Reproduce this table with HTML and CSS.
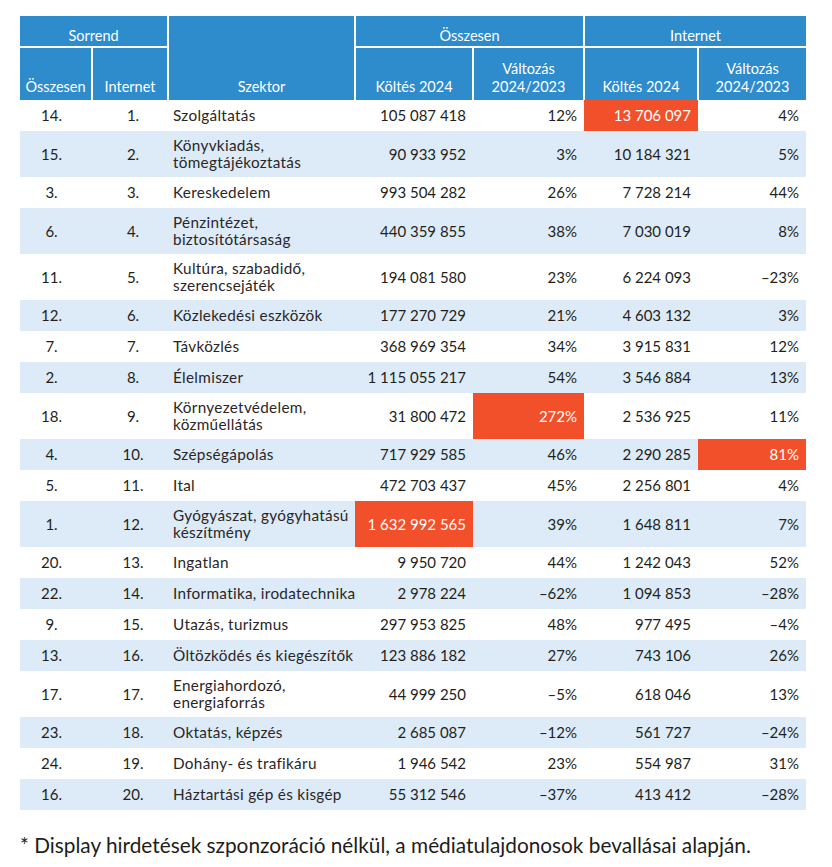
FILE: index.html
```html
<!DOCTYPE html>
<html lang="hu">
<head>
<meta charset="utf-8">
<title>Szektorok</title>
<link rel="stylesheet" href="styles.css">
</head>
<body>
<div class="page">
<table class="data">
<colgroup><col class="c1"><col class="c2"><col class="c3"><col class="c4"><col class="c5"><col class="c6"><col class="c7"></colgroup>
<thead>
<tr class="h1"><th colspan="2">Sorrend</th><th rowspan="2" class="sector-h">Szektor</th><th colspan="2">Összesen</th><th colspan="2" class="last">Internet</th></tr>
<tr class="h2"><th>Összesen</th><th>Internet</th><th>Költés 2024</th><th>Változás<br>2024/2023</th><th>Költés 2024</th><th class="last">Változás<br>2024/2023</th></tr>
</thead>
<tbody>
<tr><td class="r1">14.</td><td class="r2">1.</td><td class="sec">Szolgáltatás</td><td class="num">105 087 418</td><td class="num">12%</td><td class="num hl">13 706 097</td><td class="num">4%</td></tr>
<tr class="two"><td class="r1">15.</td><td class="r2">2.</td><td class="sec">Könyvkiadás,<br>tömegtájékoztatás</td><td class="num">90 933 952</td><td class="num">3%</td><td class="num">10 184 321</td><td class="num">5%</td></tr>
<tr><td class="r1">3.</td><td class="r2">3.</td><td class="sec">Kereskedelem</td><td class="num">993 504 282</td><td class="num">26%</td><td class="num">7 728 214</td><td class="num">44%</td></tr>
<tr class="two"><td class="r1">6.</td><td class="r2">4.</td><td class="sec">Pénzintézet,<br>biztosítótársaság</td><td class="num">440 359 855</td><td class="num">38%</td><td class="num">7 030 019</td><td class="num">8%</td></tr>
<tr class="two"><td class="r1">11.</td><td class="r2">5.</td><td class="sec">Kultúra, szabadidő,<br>szerencsejáték</td><td class="num">194 081 580</td><td class="num">23%</td><td class="num">6 224 093</td><td class="num">–23%</td></tr>
<tr><td class="r1">12.</td><td class="r2">6.</td><td class="sec">Közlekedési eszközök</td><td class="num">177 270 729</td><td class="num">21%</td><td class="num">4 603 132</td><td class="num">3%</td></tr>
<tr><td class="r1">7.</td><td class="r2">7.</td><td class="sec">Távközlés</td><td class="num">368 969 354</td><td class="num">34%</td><td class="num">3 915 831</td><td class="num">12%</td></tr>
<tr><td class="r1">2.</td><td class="r2">8.</td><td class="sec">Élelmiszer</td><td class="num">1 115 055 217</td><td class="num">54%</td><td class="num">3 546 884</td><td class="num">13%</td></tr>
<tr class="two"><td class="r1">18.</td><td class="r2">9.</td><td class="sec">Környezetvédelem,<br>közműellátás</td><td class="num">31 800 472</td><td class="num hl">272%</td><td class="num">2 536 925</td><td class="num">11%</td></tr>
<tr><td class="r1">4.</td><td class="r2">10.</td><td class="sec">Szépségápolás</td><td class="num">717 929 585</td><td class="num">46%</td><td class="num">2 290 285</td><td class="num hl">81%</td></tr>
<tr><td class="r1">5.</td><td class="r2">11.</td><td class="sec">Ital</td><td class="num">472 703 437</td><td class="num">45%</td><td class="num">2 256 801</td><td class="num">4%</td></tr>
<tr class="two"><td class="r1">1.</td><td class="r2">12.</td><td class="sec">Gyógyászat, gyógyhatású<br>készítmény</td><td class="num hl">1 632 992 565</td><td class="num">39%</td><td class="num">1 648 811</td><td class="num">7%</td></tr>
<tr><td class="r1">20.</td><td class="r2">13.</td><td class="sec">Ingatlan</td><td class="num">9 950 720</td><td class="num">44%</td><td class="num">1 242 043</td><td class="num">52%</td></tr>
<tr><td class="r1">22.</td><td class="r2">14.</td><td class="sec">Informatika, irodatechnika</td><td class="num">2 978 224</td><td class="num">–62%</td><td class="num">1 094 853</td><td class="num">–28%</td></tr>
<tr><td class="r1">9.</td><td class="r2">15.</td><td class="sec">Utazás, turizmus</td><td class="num">297 953 825</td><td class="num">48%</td><td class="num">977 495</td><td class="num">–4%</td></tr>
<tr><td class="r1">13.</td><td class="r2">16.</td><td class="sec">Öltözködés és kiegészítők</td><td class="num">123 886 182</td><td class="num">27%</td><td class="num">743 106</td><td class="num">26%</td></tr>
<tr class="two"><td class="r1">17.</td><td class="r2">17.</td><td class="sec">Energiahordozó,<br>energiaforrás</td><td class="num">44 999 250</td><td class="num">–5%</td><td class="num">618 046</td><td class="num">13%</td></tr>
<tr><td class="r1">23.</td><td class="r2">18.</td><td class="sec">Oktatás, képzés</td><td class="num">2 685 087</td><td class="num">–12%</td><td class="num">561 727</td><td class="num">–24%</td></tr>
<tr><td class="r1">24.</td><td class="r2">19.</td><td class="sec">Dohány- és trafikáru</td><td class="num">1 946 542</td><td class="num">23%</td><td class="num">554 987</td><td class="num">31%</td></tr>
<tr><td class="r1">16.</td><td class="r2">20.</td><td class="sec">Háztartási gép és kisgép</td><td class="num">55 312 546</td><td class="num">–37%</td><td class="num">413 412</td><td class="num">–28%</td></tr>
</tbody>
</table>
<p class="note">* Display hirdetések szponzoráció nélkül, a médiatulajdonosok bevallásai alapján.</p>
</div>
</body>
</html>
```
FILE: styles.css
```css
html, body {
  margin: 0;
  background: #ffffff;
}
body {
  font-family: Lato, "Noto Sans", sans-serif;
  color: #231f20;
}
.page {
  padding: 16px 0 0 20px;
  width: 812px;
}
.data {
  border-collapse: collapse;
  table-layout: fixed;
  width: 786px;
}
.c1 { width: 72px; }
.c2 { width: 76px; }
.c3 { width: 187px; }
.c4 { width: 118px; }
.c5 { width: 111px; }
.c6 { width: 114px; }
.c7 { width: 108px; }

.data th {
  background: #2e8bcc;
  color: #ffffff;
  font-weight: 400;
  font-size: 14.5px;
  line-height: 18px;
  padding: 0;
  border-right: 2px solid #ffffff;
  text-align: center;
}
.data th.last {
  border-right: none;
}
.h1 th {
  height: 29px;
  vertical-align: bottom;
  padding-bottom: 1px;
  border-bottom: 2px solid #ffffff;
}
.h1 th.sector-h {
  border-bottom: none;
  vertical-align: bottom;
  padding-bottom: 4px;
}
.h2 th {
  height: 48px;
  vertical-align: bottom;
  padding-bottom: 4px;
}

.data td {
  height: 31px;
  padding: 0 7px;
  font-size: 14px;
  line-height: 17px;
  vertical-align: middle;
  white-space: nowrap;
}
.data tr.two td {
  height: 46px;
}
.data tbody tr:nth-child(even) {
  background: #ddebf8;
}
.data td.r1 {
  text-align: center;
  padding: 0 9px 0 0;
  font-size: 15px;
}
.data td.r2 {
  text-align: center;
  padding: 0 0 0 6px;
  font-size: 15px;
}
.data td.sec {
  padding-left: 5px;
  padding-right: 0;
  font-size: 15.3px;
  letter-spacing: 0.3px;
  color: #2a2627;
}
.data td.num {
  text-align: right;
  font-size: 15px;
}
.data td.hl {
  background: #f1502a;
  color: #ffffff;
}
.note {
  margin: 23px 0 0 0;
  font-size: 20.8px;
  line-height: 24px;
  color: #1d1d1b;
}
```
